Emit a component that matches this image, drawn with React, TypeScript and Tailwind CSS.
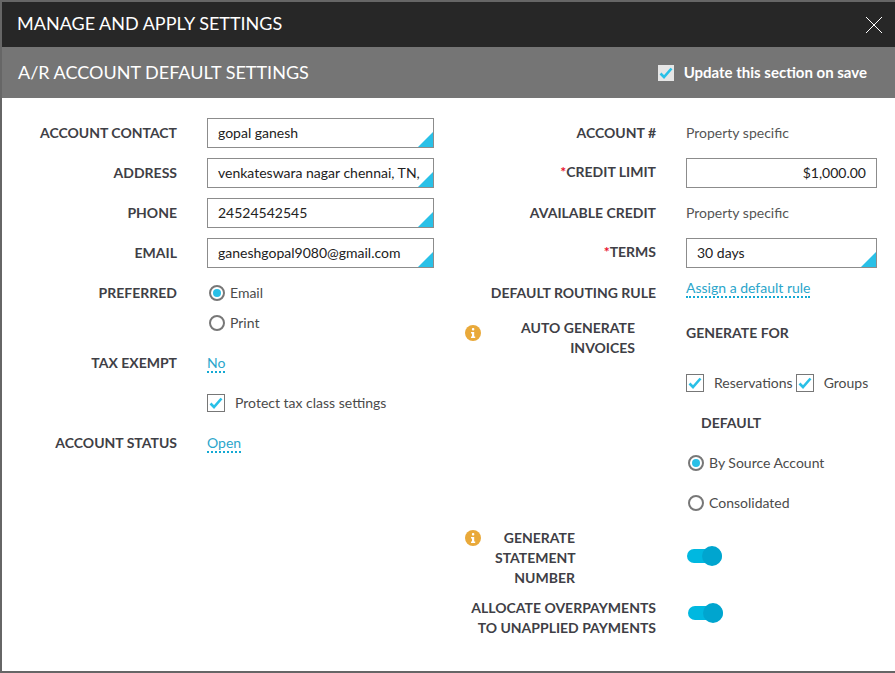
// ── Small form bits ────────────────────────────────────────────

function Label({ children, className = '' }: { children: React.ReactNode; className?: string }) {
  return (
    <div className={`text-right text-[14px] font-bold leading-[20px] text-[#3f3f46] ${className}`}>{children}</div>
  )
}

function Field({ value, width = 'w-[227px]', corner = true, right = false }: { value: string; width?: string; corner?: boolean; right?: boolean }) {
  return (
    <div className={`relative flex h-[30px] items-center overflow-hidden border border-[#8c8c8c] bg-white px-[10px] pb-[2px] text-[14px] text-[#222] ${width} ${right ? 'justify-end' : ''}`}>
      <span className="whitespace-nowrap">{value}</span>
      {corner && <span className="absolute bottom-0 right-0 h-0 w-0 border-b-[15px] border-l-[15px] border-b-[#29c0e7] border-l-transparent" />}
    </div>
  )
}

function Check({ light = false }: { light?: boolean }) {
  return (
    <span className={`flex shrink-0 items-center justify-center ${light ? 'h-[16px] w-[16px] bg-[#e6e6e6]' : 'h-[18px] w-[18px] border border-[#777] bg-white'}`}>
      <svg width="14" height="12" viewBox="0 0 14 12">
        <path d="M1.5 6.5 L5 10 L12.5 1.5" fill="none" stroke="#29c0e7" strokeWidth="2.6" />
      </svg>
    </span>
  )
}

function Radio({ on = false, label }: { on?: boolean; label: string }) {
  return (
    <div className="flex items-center gap-[5px] text-[14px] text-[#4b4b4b]">
      <span className="flex h-4 w-4 items-center justify-center rounded-full border-2 border-[#777] bg-white">
        {on && <span className="h-2 w-2 rounded-full bg-[#29c0e7]" />}
      </span>
      <span className="pb-[2px]">{label}</span>
    </div>
  )
}

function Dotted({ children }: { children: React.ReactNode }) {
  return <span className="relative -top-px border-b-2 border-dotted border-[#14a9d3] text-[14px] leading-[18px] text-[#2ba6cb]">{children}</span>
}

function Info() {
  return (
    <svg width="16" height="16" viewBox="0 0 16 16" className="shrink-0">
      <circle cx="8" cy="8" r="8" fill="#e9a93a" />
      <rect x="6.9" y="3" width="2.4" height="2.4" rx="1" fill="#fff" />
      <path d="M6 7h3.2v4.6H10.2V13H6v-1.4h1V8.4H6z" fill="#fff" />
    </svg>
  )
}

function Toggle() {
  return (
    <div className="relative h-[14px] w-[35px] rounded-full bg-[#00b8e0]">
      <span className="absolute -top-[3px] right-0 h-5 w-5 rounded-full bg-[#00a5cf]" />
    </div>
  )
}

function Row({ label, children }: { label: React.ReactNode; children: React.ReactNode }) {
  return (
    <div className="flex h-[40px] items-center">
      <Label className="w-[175px] shrink-0">{label}</Label>
      <div className="ml-[30px]">{children}</div>
    </div>
  )
}

function RightRow({ label, children }: { label: React.ReactNode; children: React.ReactNode }) {
  return (
    <div className="flex h-[40px] items-center">
      <Label className="w-[206px] shrink-0">{label}</Label>
      <div className="ml-[30px] text-[14px] text-[#555]">{children}</div>
    </div>
  )
}

function Required({ children }: { children: React.ReactNode }) {
  return (
    <span className="relative -top-px">
      <span className="text-[#e8112d]">*</span>
      {children}
    </span>
  )
}

// ── Main page ──────────────────────────────────────────────────

export default function App() {
  return (
    <div className="h-[673px] w-[895px] overflow-hidden border-b-2 border-l-2 border-t-2 border-[#666] bg-white font-['Lato',sans-serif]">
      <div className="flex h-[45px] items-center justify-between bg-[#272727] pl-[15px] pr-[12px] text-white">
        <h1 className="pb-[2px] text-[18px]">MANAGE AND APPLY SETTINGS</h1>
        <svg width="18" height="18" viewBox="0 0 18 18">
          <path d="M1 1 L17 17 M17 1 L1 17" stroke="#fff" strokeWidth="1" />
        </svg>
      </div>
      <div className="flex h-[51px] items-center justify-between bg-[#757575] pl-[16px] pr-[28px] text-white">
        <h2 className="text-[18px]">A/R ACCOUNT DEFAULT SETTINGS</h2>
        <div className="flex items-center gap-[10px] text-[15px] font-bold">
          <Check light />
          Update this section on save
        </div>
      </div>

      <div className="flex pt-[15px]">
        {/* Left column */}
        <div className="w-[450px] shrink-0">
          <Row label="ACCOUNT CONTACT"><Field value="gopal ganesh" /></Row>
          <Row label="ADDRESS"><Field value="venkateswara nagar chennai, TN," /></Row>
          <Row label="PHONE"><Field value="24524542545" /></Row>
          <Row label="EMAIL"><Field value="ganeshgopal9080@gmail.com" /></Row>
          <div className="flex h-[40px] items-center">
            <Label className="w-[175px]">PREFERRED</Label>
            <div className="ml-[32px]"><Radio on label="Email" /></div>
          </div>
          <div className="ml-[207px] flex h-[20px] items-center"><Radio label="Print" /></div>
          <div className="mt-[10px]">
            <Row label="TAX EXEMPT"><Dotted>No</Dotted></Row>
          </div>
          <div className="ml-[205px] flex h-[40px] items-center gap-[10px] text-[14px] text-[#4b4b4b]">
            <Check />
            <span className="pb-[2px]">Protect tax class settings</span>
          </div>
          <Row label="ACCOUNT STATUS"><Dotted>Open</Dotted></Row>
        </div>

        {/* Right column */}
        <div className="-ml-[2px] min-w-0 flex-1">
          <RightRow label="ACCOUNT #"><span className="block pb-[2px]">Property specific</span></RightRow>
          <RightRow label={<Required>CREDIT LIMIT</Required>}>
            <Field value="$1,000.00" width="w-[191px]" corner={false} right />
          </RightRow>
          <RightRow label="AVAILABLE CREDIT"><span className="block pb-[2px]">Property specific</span></RightRow>
          <RightRow label={<Required>TERMS</Required>}><Field value="30 days" width="w-[191px]" /></RightRow>
          <RightRow label="DEFAULT ROUTING RULE">
            <div className="-mt-[10px]"><Dotted>Assign a default rule</Dotted></div>
          </RightRow>

          <div className="flex">
            <div className="ml-[15px] mt-[12px] w-[16px]"><Info /></div>
            <Label className="ml-[24px] mt-[5px] w-[130px]">AUTO GENERATE<br />INVOICES</Label>
            <div className="ml-[51px]">
              <div className="flex h-[40px] items-center pb-[2px] text-[14px] font-bold text-[#3f3f46]">GENERATE FOR</div>
              <div className="mt-[10px] flex h-[40px] items-center whitespace-nowrap text-[14px] text-[#4b4b4b]">
                <Check /><span className="ml-[10px] mr-[3px] pb-[2px]">Reservations</span>
                <Check /><span className="ml-[10px] pb-[2px]">Groups</span>
              </div>
              <div className="ml-[15px] flex h-[40px] items-center pb-[2px] text-[14px] font-bold text-[#3f3f46]">DEFAULT</div>
              <div className="ml-[2px] flex h-[40px] items-center"><Radio on label="By Source Account" /></div>
              <div className="ml-[2px] flex h-[40px] items-center"><Radio label="Consolidated" /></div>
            </div>
          </div>

          <div className="mt-[5px] flex">
            <div className="ml-[15px] mt-[2px] w-[16px]"><Info /></div>
            <Label className="ml-[14px] w-[80px]">GENERATE<br />STATEMENT<br />NUMBER</Label>
            <div className="ml-[112px] mt-[21px]"><Toggle /></div>
          </div>
          <div className="mt-[10px] flex">
            <Label className="w-[206px]">ALLOCATE OVERPAYMENTS<br />TO UNAPPLIED PAYMENTS</Label>
            <div className="ml-[32px] mt-[8px]"><Toggle /></div>
          </div>
        </div>
      </div>
    </div>
  )
}
